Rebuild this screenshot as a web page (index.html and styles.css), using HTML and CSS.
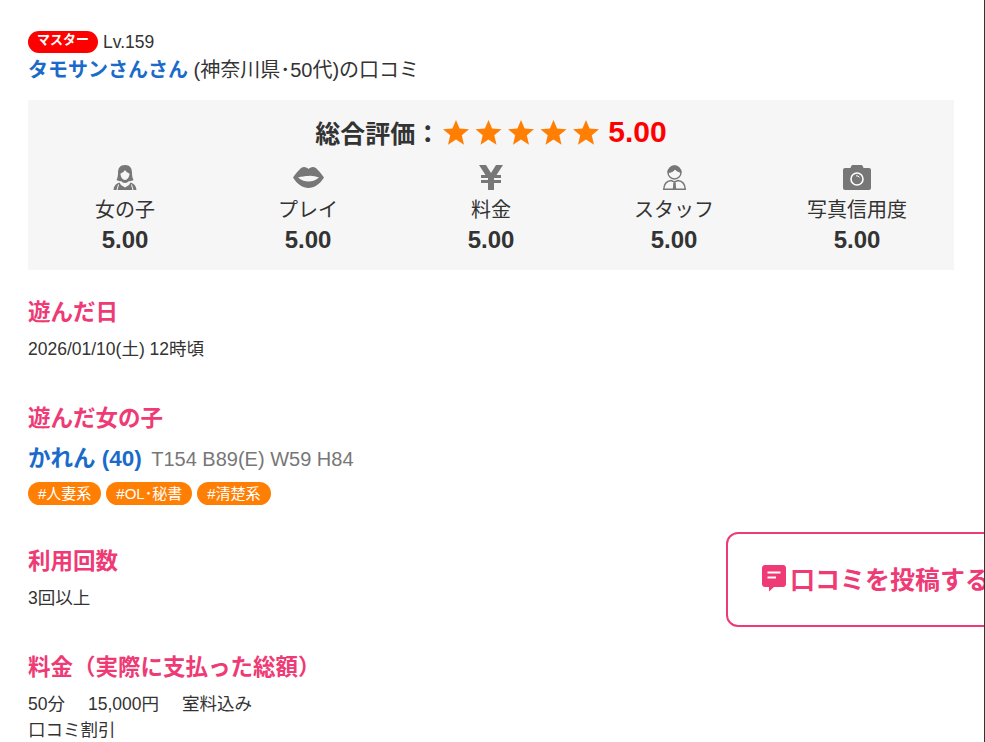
FILE: index.html
```html
<!DOCTYPE html>
<html lang="ja">
<head>
    <meta charset="UTF-8">
    <title>口コミ</title>
    <link rel="stylesheet" href="styles.css">
</head>
<body>
<div class="page">
    <div class="reviewer">
        <div class="rank"><span class="rank-badge">マスター</span><span class="rank-lv">Lv.159</span></div>
        <div class="reviewer-name"><a class="name-link">タモサンさんさん</a> (神奈川県･50代)の口コミ</div>
    </div>

    <div class="score-box">
        <div class="score-total">
            <span class="score-label">総合評価：</span>
            <svg class="stars" viewBox="0 0 156 25">
                <defs>
                    <polygon id="star" points="13,0 16.600,8.600 26,9.300 18.800,15.300 21,24.800 13,19.600 5,24.800 7.200,15.300 0,9.300 9.400,8.600"/>
                </defs>
                <use href="#star" x="0"/>
                <use href="#star" x="32.500"/>
                <use href="#star" x="65"/>
                <use href="#star" x="97.500"/>
                <use href="#star" x="130"/>
            </svg>
            <span class="score-num">5.00</span>
        </div>
        <div class="score-list">
            <div class="score-item">
                <svg class="score-icon" viewBox="0 0 24 25">
                    <path d="M12 0C7 0 5 3 5 8c0 3-.5 5-1.500 7 1.500 1 3.500 1.500 4.500 1 1 1 2.500 2 4 2s3-1 4-2c1 .5 3 0 4.500-1-1-2-1.500-4-1.500-7 0-5-2-8-7-8zm0 5c1 2 3 3 4.500 3.500 0 3.500-2 6.500-4.500 6.500s-4.500-3-4.500-6.500C9 8 11 7 12 5z" fill="#777" fill-rule="evenodd"/>
                    <path d="M6.500 17.500C3 18.500 1 20.500.5 25h23c-.5-4.500-2.500-6.500-6-7.500L16 20l-4 2.500L8 20z" fill="#777"/>
                    <path d="M5.500 19.500L4 25M18.500 19.500L20 25" stroke="#f6f6f6" stroke-width="1" fill="none"/>
                </svg>
                <div class="score-name">女の子</div>
                <div class="score-val">5.00</div>
            </div>
            <div class="score-item">
                <svg class="score-icon score-icon-lips" viewBox="0 0 31 21">
                    <path d="M0 10.500C4 5 8 0 11 0c2 0 3.500 1 4.500 2 1-1 2.500-2 4.500-2 3 0 7 5 11 10.500C27 17 21 21 15.500 21S4 17 0 10.500zm5 0c4 3 7 4 10.500 4s6.500-1 10.500-4c-4-1-7-2-10.500-1.500C12 9 9 9.500 5 10.500z" fill="#777" fill-rule="evenodd"/>
                </svg>
                <div class="score-name">プレイ</div>
                <div class="score-val">5.00</div>
            </div>
            <div class="score-item">
                <svg class="score-icon" viewBox="0 0 24 25">
                    <path d="M0 0h7l5 8 5-8h7l-6.500 10H22v3h-7v2h7v3h-7v7H9v-7H2v-3h7v-2H2v-3h4.500z" fill="#777"/>
                </svg>
                <div class="score-name">料金</div>
                <div class="score-val">5.00</div>
            </div>
            <div class="score-item">
                <svg class="score-icon" viewBox="0 0 23 25">
                    <circle cx="11.500" cy="7.500" r="6.500" fill="none" stroke="#777" stroke-width="1.400"/>
                    <path d="M5 7.500a6.500 6.500 0 0 1 13 0C15 6.500 13 5.500 12 4c-1 2-4 3.500-7 3.500z" fill="#777" stroke="#777" stroke-width="1"/>
                    <path d="M.7 24.300C1 19 4 16 8 15.500l3.500 1.500 3.500-1.500c4 .5 7 3.500 7.300 8.800z" fill="none" stroke="#777" stroke-width="1.400"/>
                    <path d="M10.300 17.500h2.400l.5 7H9.800z" fill="#777"/>
                </svg>
                <div class="score-name">スタッフ</div>
                <div class="score-val">5.00</div>
            </div>
            <div class="score-item">
                <svg class="score-icon" viewBox="0 0 28 25">
                    <path d="M10 0h8c1 0 1.500.5 2 1.500L20.500 3H26c1.100 0 2 .9 2 2v18c0 1.100-.9 2-2 2H2c-1.100 0-2-.9-2-2V5c0-1.100.9-2 2-2h5.500L8 1.500C8.500.5 9 0 10 0z" fill="#777"/>
                    <circle cx="14" cy="14" r="6" fill="none" stroke="#fff" stroke-width="1.600"/>
                    <path d="M13 10.800a3.500 3.500 0 0 1 3.500 1.600" fill="none" stroke="#fff" stroke-width="1"/>
                </svg>
                <div class="score-name">写真信用度</div>
                <div class="score-val">5.00</div>
            </div>
        </div>
    </div>

    <section class="block">
        <h3 class="block-title">遊んだ日</h3>
        <p class="block-text">2026/01/10(土) 12時頃</p>
    </section>

    <section class="block">
        <h3 class="block-title">遊んだ女の子</h3>
        <div class="girl">
            <a class="girl-name">かれん (40)</a>
            <span class="girl-size">T154 B89(E) W59 H84</span>
        </div>
        <div class="tags">
            <span class="tag">#人妻系</span>
            <span class="tag">#OL･秘書</span>
            <span class="tag">#清楚系</span>
        </div>
    </section>

    <section class="block">
        <h3 class="block-title">利用回数</h3>
        <p class="block-text">3回以上</p>
    </section>

    <section class="block">
        <h3 class="block-title">料金（実際に支払った総額）</h3>
        <p class="block-text"><span class="fee-part">50分</span><span class="fee-part">15,000円</span><span class="fee-part">室料込み</span><br>口コミ割引</p>
    </section>

    <a class="post-btn">
        <svg class="post-icon" viewBox="0 0 26 28">
            <path d="M4 1h18c1.700 0 3 1.300 3 3v16c0 1.700-1.300 3-3 3H13l-5 4.500V23H4c-1.700 0-3-1.300-3-3V4c0-1.700 1.300-3 3-3z" fill="#ee3a75"/>
            <rect x="6.500" y="7.500" width="13" height="2" fill="#fff"/>
            <rect x="6.500" y="12.500" width="8.500" height="2" fill="#fff"/>
        </svg>
        <span>口コミを投稿する</span>
    </a>
</div>
</body>
</html>
```

FILE: styles.css
```css
html, body {
    margin: 0;
    height: 100%;
    overflow: hidden;
    background: #fff;
}
body {
    font-family: "Liberation Sans", "Noto Sans CJK JP", sans-serif;
    color: #333;
}
.page {
    position: relative;
    box-sizing: border-box;
    height: 742px;
    padding: 31px 30px 0 28px;
    border-right: 1px solid #333;
    overflow: hidden;
}
.rank {
    display: flex;
    align-items: center;
    height: 22px;
    font-size: 17.5px;
}
.rank-badge {
    box-sizing: border-box;
    width: 70px;
    height: 22px;
    line-height: 18px;
    margin-right: 5px;
    border-radius: 11px;
    background: #f00;
    color: #fff;
    font-size: 13px;
    font-weight: bold;
    text-align: center;
}
.reviewer-name {
    margin-top: 3px;
    line-height: 28px;
    font-size: 20px;
}
.name-link {
    color: #1a6bc9;
    font-weight: bold;
}
.score-box {
    margin-top: 16px;
    height: 170px;
    padding-top: 14px;
    box-sizing: border-box;
    background: #f6f6f6;
}
.score-total {
    display: flex;
    justify-content: center;
    align-items: center;
    height: 36px;
    font-weight: bold;
}
.score-label {
    font-size: 25px;
}
.stars {
    width: 156px;
    height: 25px;
    margin-left: 3px;
    fill: #ff7f05;
}
.score-num {
    margin-left: 9px;
    font-size: 30px;
    color: #f00;
}
.score-list {
    display: flex;
    margin-top: 15px;
    padding: 0 5.5px;
}
.score-item {
    flex: 1;
    text-align: center;
}
.score-icon {
    display: block;
    height: 25px;
    margin: 0 auto;
}
.score-icon-lips {
    height: 21px;
    padding: 2px 0;
}
.score-name {
    margin-top: 7px;
    line-height: 26px;
    font-size: 20px;
}
.score-val {
    margin-top: 2px;
    line-height: 30px;
    font-size: 24px;
    font-weight: bold;
}
.block {
    margin-top: 28px;
}
.block + .block {
    margin-top: 42px;
}
.block-title {
    margin: 0;
    line-height: 30px;
    font-size: 22.5px;
    font-weight: bold;
    color: #ee3a75;
}
.block-text {
    margin: 8px 0 0;
    line-height: 26px;
    font-size: 17.5px;
}
.fee-part {
    margin-right: 23px;
}
.girl {
    margin-top: 10px;
    line-height: 30px;
}
.girl-name {
    color: #1a6bc9;
    font-size: 22.5px;
    font-weight: bold;
}
.girl-size {
    margin-left: 5px;
    font-size: 20px;
    color: #777;
}
.tags {
    display: flex;
    gap: 5px;
    margin-top: 6px;
}
.tag {
    height: 23px;
    line-height: 23px;
    padding: 0 10px;
    border-radius: 12px;
    background: #ff7f05;
    color: #fff;
    font-size: 15px;
}
/* 右端に固定の投稿ボタン */
.post-btn {
    position: absolute;
    top: 532px;
    left: 726px;
    display: flex;
    align-items: center;
    box-sizing: border-box;
    width: 300px;
    height: 95px;
    padding: 0 0 4px 33px;
    border: 2px solid #ee3a75;
    border-radius: 12px;
    background: #fff;
    color: #ee3a75;
    font-size: 25px;
    font-weight: bold;
    white-space: nowrap;
}
.post-icon {
    width: 26px;
    height: 28px;
    margin-right: 3px;
}
```
